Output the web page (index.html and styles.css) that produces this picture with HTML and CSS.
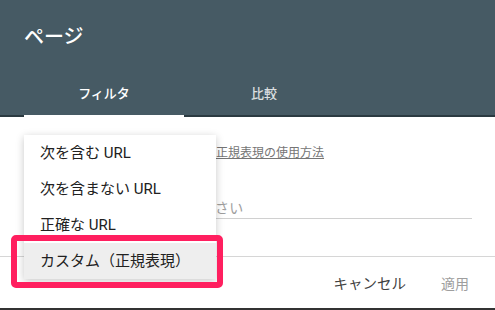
FILE: index.html
```html
<!DOCTYPE html>
<html lang="ja">
<head>
    <meta charset="UTF-8">
    <meta name="viewport" content="width=device-width, initial-scale=1.0">
    <title>ページ</title>
    <link rel="stylesheet" href="styles.css">
</head>
<body>
    <div class="dialog">
        <div class="header">
            <h1>ページ</h1>
            <div class="tabs">
                <div class="tab tab-active">フィルタ</div>
                <div class="tab">比較</div>
            </div>
        </div>

        <div class="content">
            <div class="help-row"><a href="#" class="help-link">正規表現の使用方法</a></div>
            <div class="field">さい</div>
        </div>

        <div class="footer">
            <button class="btn-text">キャンセル</button>
            <button class="btn-text btn-disabled">適用</button>
        </div>

        <ul class="menu">
            <li class="menu-item">次を含む URL</li>
            <li class="menu-item">次を含まない URL</li>
            <li class="menu-item">正確な URL</li>
            <li class="menu-item menu-item-selected">カスタム（正規表現）</li>
        </ul>
    </div>
</body>
</html>
```

FILE: styles.css
```css
body {
    margin: 0;
    padding: 0;
    font-family: Roboto, "Noto Sans CJK JP", sans-serif;
    background: #fff;
    color: #212121;
}

.dialog {
    position: relative;
    width: 495px;
    height: 310px;
    overflow: hidden;
}

.header {
    height: 115px;
    background: #465a64;
    border-bottom: 2px solid #2b3a41;
    color: white;
}

.header h1 {
    margin: 0;
    padding: 0 24px;
    height: 72px;
    line-height: 74px;
    font-size: 20px;
    font-weight: 500;
}

.tabs {
    display: flex;
    padding: 0 24px;
    height: 43px;
}

.tab {
    position: relative;
    width: 160px;
    height: 43px;
    line-height: 43px;
    text-align: center;
    font-size: 13px;
    font-weight: 500;
    color: rgba(255,255,255,0.82);
}

.tab-active {
    color: white;
}

.tab-active:after {
    content: "";
    position: absolute;
    left: 0;
    right: 0;
    bottom: -2px;
    height: 2px;
    background: white;
}

.content {
    padding: 28px 23px 37px 24px;
}

/* text left of x=216 sits under the dropdown, so rows start after it */
.help-row {
    height: 16px;
    line-height: 16px;
    font-size: 12px;
    padding-left: 192px;
    white-space: nowrap;
}

.help-link {
    color: #757575;
    text-decoration: underline;
}

.field {
    margin-top: 38px;
    height: 19px;
    line-height: 19px;
    font-size: 14px;
    color: #9e9e9e;
    letter-spacing: 0.3px;
    padding-left: 191px;
    white-space: nowrap;
    border-bottom: 1px solid #d0d0d0;
}

.footer {
    display: flex;
    justify-content: flex-end;
    align-items: center;
    gap: 19px;
    height: 51px;
    padding-right: 18px;
    border-top: 1px solid #d6d6d6;
    border-bottom: 2px solid #333;
}

.btn-text {
    padding: 0 8px;
    border: none;
    background: none;
    font-family: Roboto, "Noto Sans CJK JP", sans-serif;
    font-size: 14.5px;
    color: #424242;
    cursor: pointer;
}

.btn-disabled {
    font-size: 14px;
    color: #9e9e9e;
}

.menu {
    position: absolute;
    top: 135px;
    left: 24px;
    width: 192px;
    margin: 0;
    padding: 0;
    list-style: none;
    background: white;
    box-shadow: 0 2px 8px rgba(0,0,0,0.22);
}

.menu-item {
    position: relative;
    height: 36px;
    line-height: 36px;
    padding-left: 16px;
    font-size: 15px;
    white-space: nowrap;
}

.menu-item-selected {
    background: #eeeeee;
}

.menu-item-selected:after {
    content: "";
    position: absolute;
    top: -8px;
    left: -13px;
    right: -7px;
    bottom: -9px;
    border: 6px solid #ff1f5f;
    border-radius: 5px;
}
```
